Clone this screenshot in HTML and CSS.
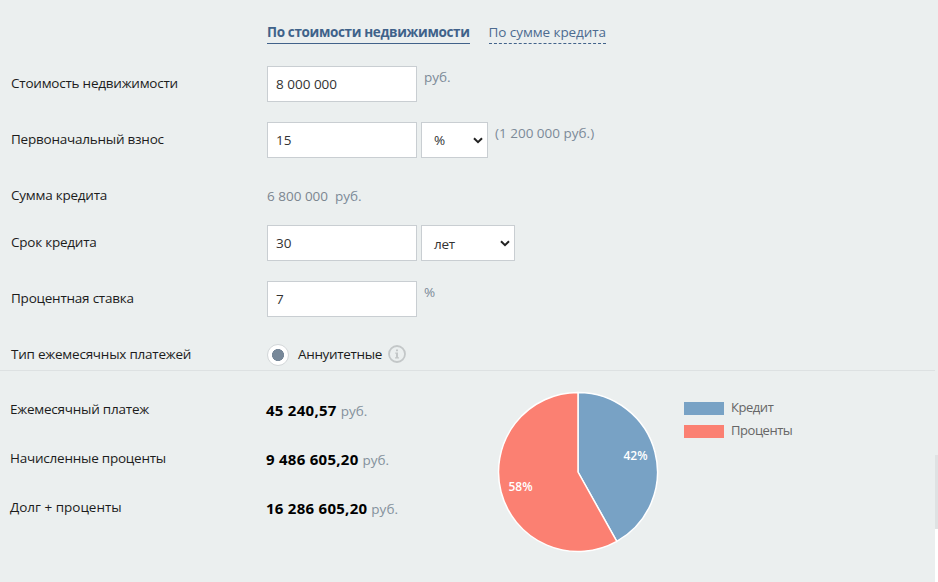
FILE: index.html
```html
<!DOCTYPE html>
<html lang="ru">
<head>
  <meta charset="utf-8">
  <title>Ипотечный калькулятор</title>
  <link rel="stylesheet" href="styles.css">
</head>
<body>
  <div class="calculator">
    <form class="params">
      <div class="tabs">
        <a class="tab active">По стоимости недвижимости</a>
        <a class="tab">По сумме кредита</a>
      </div>
      <div class="row">
        <div class="label">Стоимость недвижимости</div>
        <input class="field" type="text" value="8 000 000">
        <span class="unit">руб.</span>
      </div>
      <div class="row">
        <div class="label">Первоначальный взнос</div>
        <input class="field" type="text" value="15">
        <div class="select small">
          <span>%</span>
          <svg width="10" height="7" viewBox="0 0 10 7"><path d="M1 1.2 L5 5.2 L9 1.2" fill="none" stroke="#222" stroke-width="2"/></svg>
        </div>
        <span class="unit">(1 200 000 руб.)</span>
      </div>
      <div class="row sum">
        <div class="label">Сумма кредита</div>
        <span class="amount">6 800 000</span>
        <span class="amount-unit">руб.</span>
      </div>
      <div class="row">
        <div class="label">Срок кредита</div>
        <input class="field" type="text" value="30">
        <div class="select">
          <span class="low">лет</span>
          <svg width="10" height="7" viewBox="0 0 10 7"><path d="M1 1.2 L5 5.2 L9 1.2" fill="none" stroke="#222" stroke-width="2"/></svg>
        </div>
      </div>
      <div class="row">
        <div class="label">Процентная ставка</div>
        <input class="field" type="text" value="7">
        <span class="unit">%</span>
      </div>
      <div class="row type">
        <div class="label">Тип ежемесячных платежей</div>
        <span class="radio"></span>
        <span class="radio-text">Аннуитетные</span>
        <svg class="info" width="18" height="18" viewBox="0 0 18 18">
          <circle cx="9" cy="9" r="8" fill="none" stroke="#c3c7c8" stroke-width="1.8"/>
          <path d="M8 4.4h2v1.8H8zM7.2 7.5H10V12.3h1V13.5H7V12.3h1V8.7h-.8z" fill="#c3c7c8"/>
        </svg>
      </div>
    </form>
    <div class="results">
      <div class="totals">
        <div class="total"><div class="label">Ежемесячный платеж</div><b>45 240,57</b><span>руб.</span></div>
        <div class="total"><div class="label">Начисленные проценты</div><b>9 486 605,20</b><span>руб.</span></div>
        <div class="total"><div class="label wide">Долг + проценты</div><b>16 286 605,20</b><span>руб.</span></div>
      </div>
      <svg class="pie" width="162" height="162" viewBox="0 0 162 162">
        <path d="M81 81 V1.5 A79.5 79.5 0 0 1 119.8 150.4 Z" fill="#78a2c5" stroke="#fff" stroke-width="1.5"/>
        <path d="M81 81 L119.8 150.4 A79.5 79.5 0 1 1 81 1.5 Z" fill="#fb8072" stroke="#fff" stroke-width="1.5"/>
        <text x="138.5" y="69" text-anchor="middle">42%</text>
        <text x="23.5" y="100" text-anchor="middle">58%</text>
      </svg>
      <div class="legend">
        <div class="legend-item"><i class="blue"></i><span>Кредит</span></div>
        <div class="legend-item"><i class="red"></i><span>Проценты</span></div>
      </div>
    </div>
  </div>
  <div class="scroll"><div class="thumb"></div></div>
</body>
</html>
```
FILE: styles.css
```css
* {
  box-sizing: border-box;
}
body {
  margin: 0;
  height: 582px;
  display: flex;
  overflow: hidden;
  background: #ebefef;
  font-family: "Open Sans", "Noto Sans", sans-serif;
  font-size: 13.5px;
  line-height: 20px;
  color: #1c1c1c;
}
.calculator {
  width: 935px;
}
.params {
  height: 371px;
  padding-left: 11px;
  border-bottom: 1px solid #dde1e2;
}
.tabs {
  display: flex;
  gap: 19px;
  height: 66px;
  padding: 22px 0 0 256px;
}
.tab {
  height: 22px;
  border-bottom: 1px dashed #41628a;
  color: #4d6b90;
  letter-spacing: -0.07px;
  white-space: nowrap;
}
.tab.active {
  border-bottom: 1px solid #41628a;
  color: #3f628a;
  font-weight: bold;
  letter-spacing: -0.35px;
}
.row {
  display: flex;
  align-items: center;
  height: 36px;
  margin-bottom: 20px;
}
.row.sum {
  margin-bottom: 11px;
}
.row.type {
  height: 33px;
  padding-top: 3px;
  margin-bottom: 0;
}
.label {
  width: 256px;
  padding-bottom: 2px;
  letter-spacing: -0.23px;
  white-space: nowrap;
}
.label.wide {
  letter-spacing: 0;
}
.field {
  width: 150px;
  height: 36px;
  padding: 0 8px;
  border: 1px solid #c9ced2;
  background: #fff;
  font: inherit;
  color: #333;
}
.select {
  display: flex;
  align-items: center;
  justify-content: space-between;
  width: 94px;
  height: 36px;
  margin-left: 4px;
  padding: 0 4px 0 12px;
  border: 1px solid #c9ced2;
  background: #fff;
  color: #333;
}
.select.small {
  width: 67px;
}
.select .low {
  padding-top: 2px;
  letter-spacing: -0.3px;
}
.unit {
  align-self: flex-start;
  margin: 1px 0 0 7px;
  color: #7c8a98;
}
.amount {
  color: #7c868f;
}
.amount-unit {
  margin-left: 7px;
  color: #7c8a98;
}
.radio {
  width: 22px;
  height: 22px;
  border: 1px solid #d3d7d9;
  border-radius: 50%;
  background: radial-gradient(circle, #778899 5.7px, #fff 6.3px);
}
.radio-text {
  margin: 0 6px 2px 9px;
  letter-spacing: -0.35px;
}
.info {
  margin-bottom: 2px;
}
.results {
  display: flex;
  padding-left: 10px;
}
.totals {
  width: 487px;
  padding-top: 14px;
}
.total {
  display: flex;
  align-items: center;
  height: 49px;
}
.total b {
  margin-right: 4px;
  font-size: 15px;
  letter-spacing: 0.27px;
  color: #000;
}
.total span {
  padding-top: 2px;
  color: #84919c;
}
.pie {
  margin-top: 20px;
}
.pie text {
  fill: #fff;
  font-size: 12px;
  font-weight: 600;
}
.legend {
  padding: 25px 0 0 25px;
  font-size: 13px;
  letter-spacing: -0.45px;
  color: #666;
}
.legend-item {
  display: flex;
  align-items: center;
  height: 23px;
}
.legend-item span {
  padding-bottom: 1px;
}
.legend-item i {
  width: 40px;
  height: 13px;
  margin: 1px 7px 0 0;
}
.blue {
  background: #78a2c5;
}
.red {
  background: #fb8072;
}
.scroll {
  width: 3px;
  padding-top: 455px;
}
.thumb {
  height: 127px;
  border-top: 74px solid #dfe2e3;
  background: #fff;
}
```
